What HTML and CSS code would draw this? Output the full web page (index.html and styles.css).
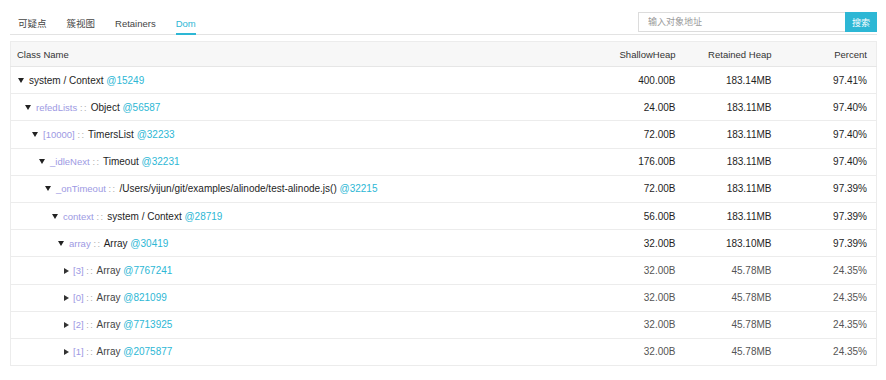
FILE: index.html
```html
<!DOCTYPE html>
<html lang="zh-CN">
<head>
    <meta charset="UTF-8">
    <title>Dom</title>
    <link rel="stylesheet" href="styles.css">
</head>
<body>

    <div class="toolbar">
        <ul class="tabs">
            <li class="tab">可疑点</li>
            <li class="tab">簇视图</li>
            <li class="tab">Retainers</li>
            <li class="tab active">Dom</li>
        </ul>
        <div class="search">
            <input type="text" class="search-input" placeholder="输入对象地址">
            <button class="search-btn">搜索</button>
        </div>
    </div>

    <table class="heap-table">
        <colgroup>
            <col>
            <col class="num-col">
            <col class="num-col">
            <col class="num-col">
        </colgroup>
        <thead>
            <tr>
                <th class="col-name">Class Name</th>
                <th class="col-num">ShallowHeap</th>
                <th class="col-num">Retained Heap</th>
                <th class="col-num">Percent</th>
            </tr>
        </thead>
        <tbody>
            <tr class="open">
                <td class="lv0"><span class="arrow down"></span>system / Context <span class="addr">@15249</span></td>
                <td>400.00B</td><td>183.14MB</td><td>97.41%</td>
            </tr>
            <tr class="open">
                <td class="lv1"><span class="arrow down"></span><span class="prop">refedLists</span> <span class="sep">::</span> Object <span class="addr">@56587</span></td>
                <td>24.00B</td><td>183.11MB</td><td>97.40%</td>
            </tr>
            <tr class="open">
                <td class="lv2"><span class="arrow down"></span><span class="prop">[10000]</span> <span class="sep">::</span> TimersList <span class="addr">@32233</span></td>
                <td>72.00B</td><td>183.11MB</td><td>97.40%</td>
            </tr>
            <tr class="open">
                <td class="lv3"><span class="arrow down"></span><span class="prop">_idleNext</span> <span class="sep">::</span> Timeout <span class="addr">@32231</span></td>
                <td>176.00B</td><td>183.11MB</td><td>97.40%</td>
            </tr>
            <tr class="open">
                <td class="lv4"><span class="arrow down"></span><span class="prop">_onTimeout</span> <span class="sep">::</span> /Users/yijun/git/examples/alinode/test-alinode.js() <span class="addr">@32215</span></td>
                <td>72.00B</td><td>183.11MB</td><td>97.39%</td>
            </tr>
            <tr class="open">
                <td class="lv5"><span class="arrow down"></span><span class="prop">context</span> <span class="sep">::</span> system / Context <span class="addr">@28719</span></td>
                <td>56.00B</td><td>183.11MB</td><td>97.39%</td>
            </tr>
            <tr class="open">
                <td class="lv6"><span class="arrow down"></span><span class="prop">array</span> <span class="sep">::</span> Array <span class="addr">@30419</span></td>
                <td>32.00B</td><td>183.10MB</td><td>97.39%</td>
            </tr>
            <tr>
                <td class="lv7"><span class="arrow right"></span><span class="prop">[3]</span> <span class="sep">::</span> Array <span class="addr">@7767241</span></td>
                <td>32.00B</td><td>45.78MB</td><td>24.35%</td>
            </tr>
            <tr>
                <td class="lv7"><span class="arrow right"></span><span class="prop">[0]</span> <span class="sep">::</span> Array <span class="addr">@821099</span></td>
                <td>32.00B</td><td>45.78MB</td><td>24.35%</td>
            </tr>
            <tr>
                <td class="lv7"><span class="arrow right"></span><span class="prop">[2]</span> <span class="sep">::</span> Array <span class="addr">@7713925</span></td>
                <td>32.00B</td><td>45.78MB</td><td>24.35%</td>
            </tr>
            <tr>
                <td class="lv7"><span class="arrow right"></span><span class="prop">[1]</span> <span class="sep">::</span> Array <span class="addr">@2075877</span></td>
                <td>32.00B</td><td>45.78MB</td><td>24.35%</td>
            </tr>
        </tbody>
    </table>

</body>
</html>
```

FILE: styles.css
```css
body {
    margin: 0;
    padding: 0 9px 0 10px;
    background-color: #fff;
    color: #333;
    font-family: "Liberation Sans", "Noto Sans CJK SC", sans-serif;
    font-size: 10px;
}

/* top bar: tabs + search */
.toolbar {
    display: flex;
    justify-content: space-between;
    align-items: flex-end;
    height: 35px;
    border-bottom: 1px solid #e3e3e3;
    box-sizing: border-box;
    margin-bottom: 6px;
}

.tabs {
    display: flex;
    gap: 20px;
    list-style: none;
    margin: 0 0 -1px 0;
    padding: 0 0 0 8px;
}

.tab {
    line-height: 14px;
    padding-bottom: 2px;
    color: #444;
    font-size: 9.5px;
    border-bottom: 2px solid transparent;
}

.tab.active {
    color: #2db7d5;
    border-bottom-color: #2db7d5;
}

.search {
    display: flex;
    margin-bottom: 2px;
}

.search-input {
    width: 207px;
    height: 20px;
    box-sizing: border-box;
    border: 1px solid #dcdcdc;
    border-right: none;
    padding: 0 9px;
    font-family: "Liberation Sans", "Noto Sans CJK SC", sans-serif;
    font-size: 9px;
    outline: none;
}

.search-input::placeholder {
    color: #999;
}

.search-btn {
    width: 32px;
    height: 20px;
    border: none;
    padding: 0;
    background-color: #2db7d5;
    color: #fff;
    font-family: "Liberation Sans", "Noto Sans CJK SC", sans-serif;
    font-size: 9px;
}

/* heap table */
.heap-table {
    width: 100%;
    table-layout: fixed;
    border-collapse: collapse;
    border: 1px solid #ececec;
}

.num-col {
    width: 96px;
}

.heap-table th {
    height: 24px;
    padding: 0;
    background-color: #f7f7f7;
    font-weight: normal;
    font-size: 9.5px;
    color: #333;
    border-bottom: 1px solid #e6e6e6;
}

.heap-table th.col-name {
    text-align: left;
    padding-left: 6px;
}

.heap-table th.col-num {
    text-align: right;
    padding-right: 9px;
}

.heap-table td {
    height: 26.2px;
    padding: 0 9px 0 0;
    text-align: right;
    color: #555;
    border-bottom: 1px solid #ececec;
    white-space: nowrap;
}

.heap-table td:first-child {
    text-align: left;
    color: #444;
}

.heap-table tr.open td {
    color: #1e1e1e;
}

.lv0 { padding-left: 7px !important; }
.lv1 { padding-left: 14px !important; }
.lv2 { padding-left: 21px !important; }
.lv3 { padding-left: 28px !important; }
.lv4 { padding-left: 34px !important; }
.lv5 { padding-left: 41px !important; }
.lv6 { padding-left: 47px !important; }
.lv7 { padding-left: 53px !important; }

.arrow {
    display: inline-block;
    width: 0;
    height: 0;
    margin-right: 5px;
    vertical-align: 1px;
}

.arrow.down {
    border-left: 3px solid transparent;
    border-right: 3px solid transparent;
    border-top: 5px solid #222;
}

.arrow.right {
    border-top: 3px solid transparent;
    border-bottom: 3px solid transparent;
    border-left: 5px solid #333;
    margin-right: 4px;
    vertical-align: 0;
}

.prop {
    font-size: 9.5px;
    color: #9d99e3;
}

.sep {
    font-size: 9px;
    letter-spacing: 1.5px;
    color: #aaa;
}

.addr {
    color: #2db7d5;
}
```
